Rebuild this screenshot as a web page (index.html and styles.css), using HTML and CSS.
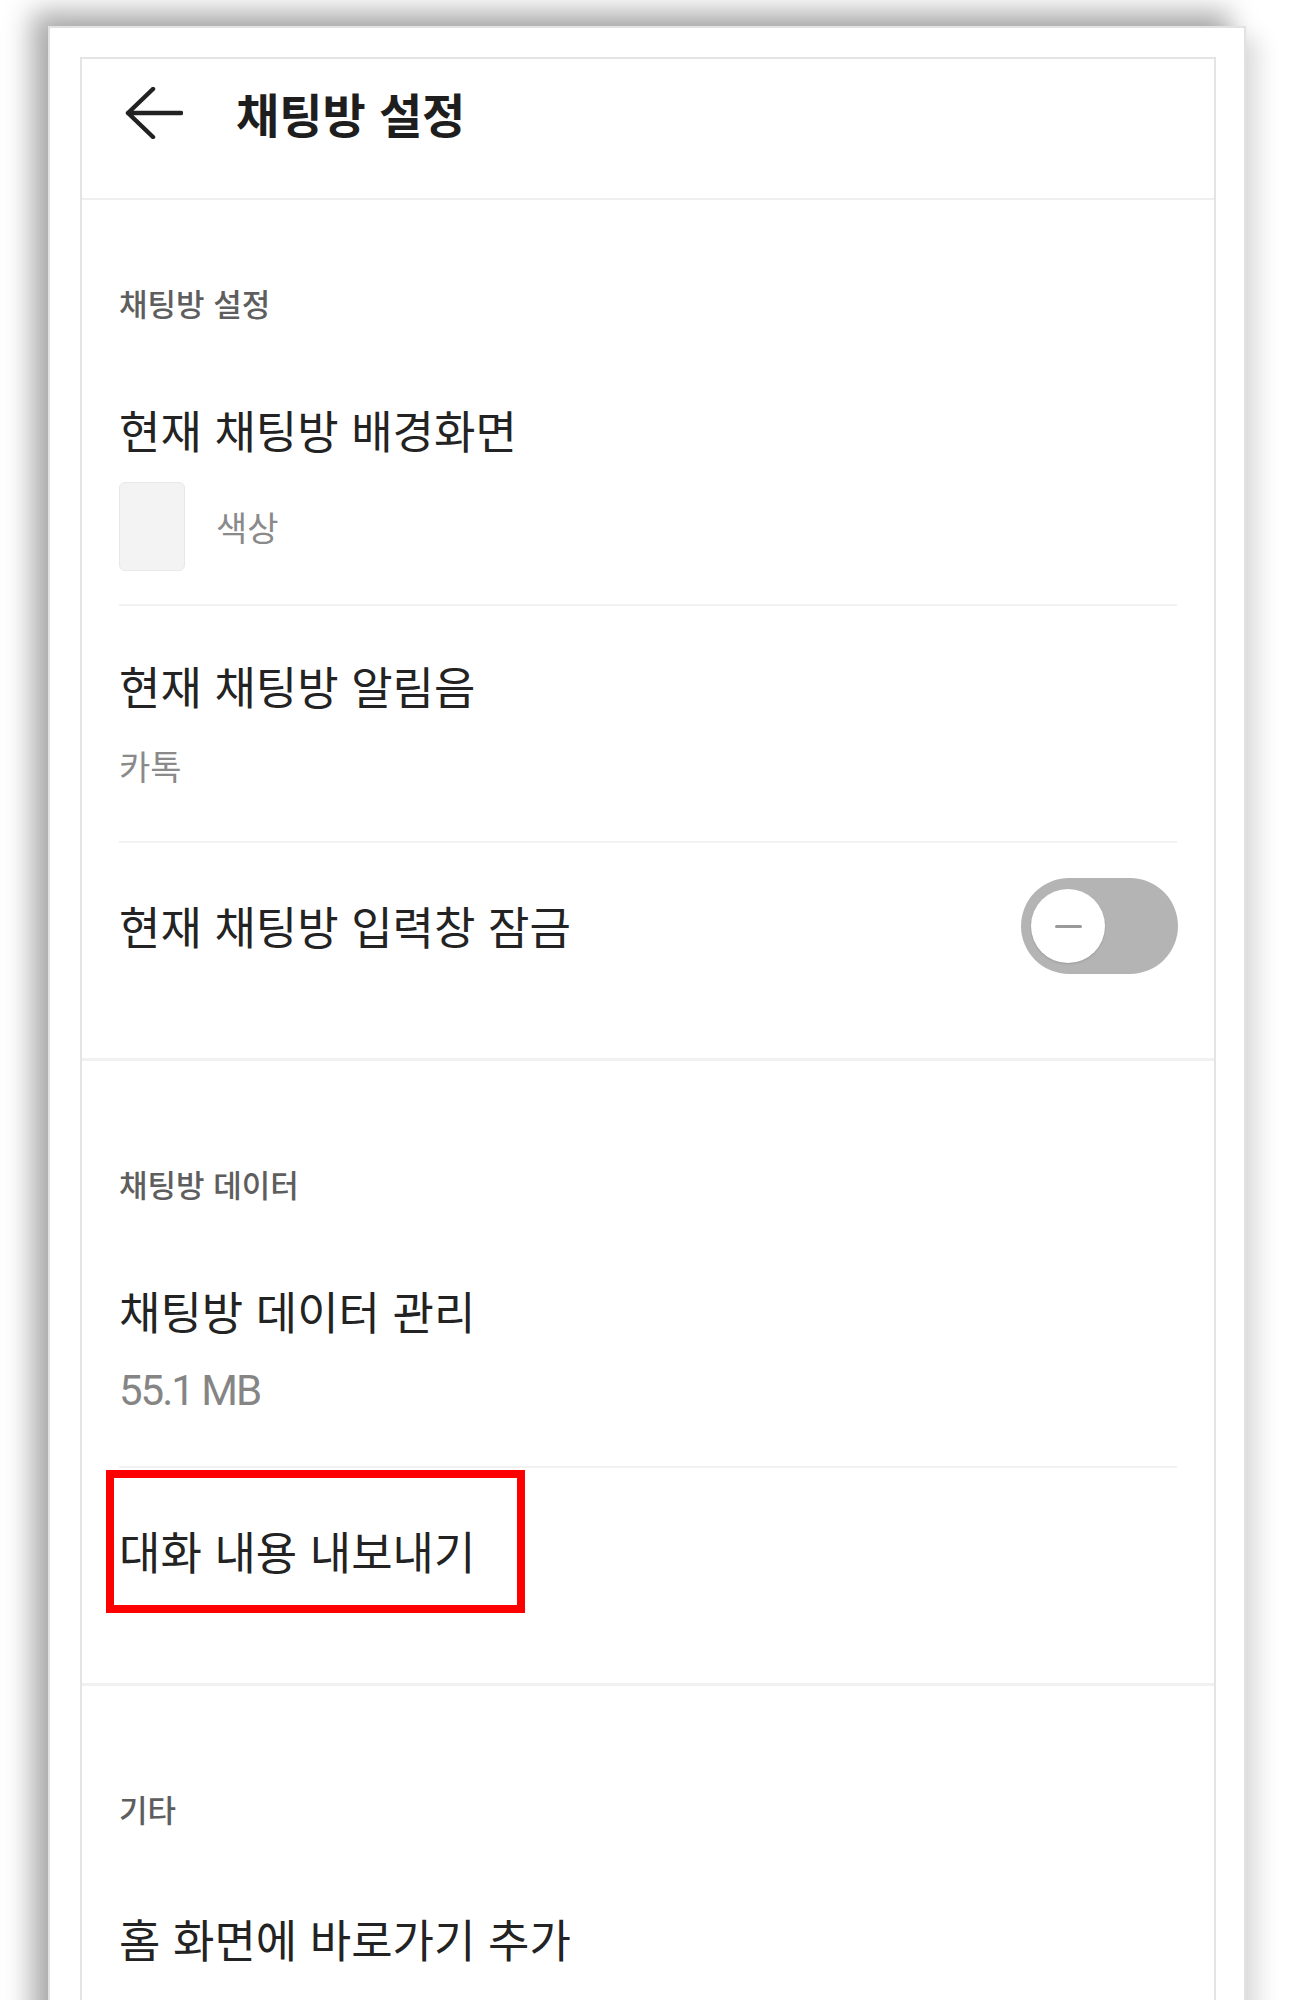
FILE: index.html
```html
<!DOCTYPE html>
<html lang="ko">

<head>
    <meta charset="UTF-8" />
    <meta name="viewport" content="width=device-width, initial-scale=1.0" />
    <title>채팅방 설정</title>
    <link rel="stylesheet" href="styles.css">
</head>

<body>
    <div class="frame">
        <div class="panel">
            <div class="header">
                <svg class="back-icon" viewBox="0 0 60 52" width="60" height="52">
                    <path d="M58 26H5 M30 2 L5 26 L30 50" fill="none" stroke="#222" stroke-width="4.5"
                        stroke-linecap="round" stroke-linejoin="round" />
                </svg>
                <h1>채팅방 설정</h1>
            </div>

            <div class="section section-first">
                <div class="section-label">채팅방 설정</div>
                <div class="list">
                    <div class="item item-bg">
                        <div class="item-title">현재 채팅방 배경화면</div>
                        <div class="swatch-row">
                            <div class="swatch"></div>
                            <span class="item-sub">색상</span>
                        </div>
                    </div>
                    <div class="item">
                        <div class="item-title">현재 채팅방 알림음</div>
                        <div class="item-sub item-sub-gap">카톡</div>
                    </div>
                    <div class="item item-single">
                        <div class="item-title">현재 채팅방 입력창 잠금</div>
                        <div class="toggle">
                            <div class="knob"><span class="minus"></span></div>
                        </div>
                    </div>
                </div>
            </div>

            <div class="section">
                <div class="section-label">채팅방 데이터</div>
                <div class="list">
                    <div class="item">
                        <div class="item-title">채팅방 데이터 관리</div>
                        <div class="item-size">55.1 MB</div>
                    </div>
                    <div class="item item-single">
                        <div class="item-title">대화 내용 내보내기</div>
                        <div class="highlight"></div>
                    </div>
                </div>
            </div>

            <div class="section">
                <div class="section-label">기타</div>
                <div class="list">
                    <div class="item item-single">
                        <div class="item-title">홈 화면에 바로가기 추가</div>
                    </div>
                </div>
            </div>
        </div>
    </div>
</body>

</html>
```

FILE: styles.css
```css
* {
    margin: 0;
    padding: 0;
    box-sizing: border-box;
}

body {
    font-family: "Noto Sans CJK KR", "Noto Sans", sans-serif;
    background: #fff;
    color: #242424;
    overflow: hidden;
}

.frame {
    width: 1198px;
    min-height: 2100px;
    margin: 26px 0 0 48px;
    padding: 29px 28px 0 30px;
    background: #fff;
    border: 2px solid #e2e2e2;
    border-bottom: none;
    box-shadow: -16px -14px 26px rgba(0, 0, 0, 0.34), 16px 12px 20px rgba(0, 0, 0, 0.1);
}

.panel {
    width: 1136px;
    border: 2px solid #e4e4e4;
    border-bottom: none;
    background: #fff;
}

.header {
    display: flex;
    align-items: center;
    height: 141px;
    padding: 0 0 32px 41px;
    border-bottom: 2px solid #efefef;
}

.back-icon {
    flex-shrink: 0;
}

.header h1 {
    margin-left: 53px;
    font-size: 47px;
    font-weight: 700;
    line-height: 56px;
    color: #1e1e1e;
}

.section {
    padding: 103px 0 49px;
    border-bottom: 3px solid #f1f1f1;
}

.section-first {
    padding-top: 83px;
}

.section-label {
    padding: 0 37px;
    margin-bottom: 27px;
    font-size: 31px;
    font-weight: 500;
    line-height: 40px;
    color: #5e5e5e;
}

.list {
    padding: 0 37px;
}

.item {
    position: relative;
    padding: 52px 0 51px;
    border-bottom: 2px solid #f2f2f2;
}

.item:last-child {
    border-bottom: none;
}

.item-bg {
    padding-bottom: 33px;
}

.item-single {
    display: flex;
    align-items: center;
    justify-content: space-between;
    min-height: 166px;
    padding: 35px 0;
}

.item-title {
    font-size: 45px;
    line-height: 56px;
    color: #232323;
}

.item-sub {
    font-size: 34px;
    line-height: 48px;
    color: #8a8a8a;
}

.item-sub-gap {
    margin-top: 28px;
}

.item-size {
    margin-top: 28px;
    font-family: Roboto, "Noto Sans CJK KR", sans-serif;
    font-size: 42px;
    line-height: 48px;
    letter-spacing: -2px;
    color: #858585;
}

.swatch-row {
    display: flex;
    align-items: center;
    gap: 31px;
    margin-top: 24px;
}

.swatch {
    width: 66px;
    height: 89px;
    border-radius: 6px;
    background: #f3f3f3;
    border: 1px solid #e8e8e8;
}

.toggle {
    display: flex;
    align-items: center;
    width: 157px;
    height: 96px;
    padding: 0 10px;
    margin-right: -1px;
    border-radius: 48px;
    background: #b4b4b4;
}

.knob {
    display: flex;
    align-items: center;
    justify-content: center;
    width: 74px;
    height: 74px;
    border-radius: 50%;
    background: #fff;
    box-shadow: 0 1px 2px rgba(0, 0, 0, 0.15);
}

.minus {
    width: 27px;
    height: 3px;
    border-radius: 2px;
    background: #9a9a9a;
}

.highlight {
    position: absolute;
    top: 2px;
    left: -13px;
    width: 419px;
    height: 143px;
    border: 8px solid #ff0000;
}
```
